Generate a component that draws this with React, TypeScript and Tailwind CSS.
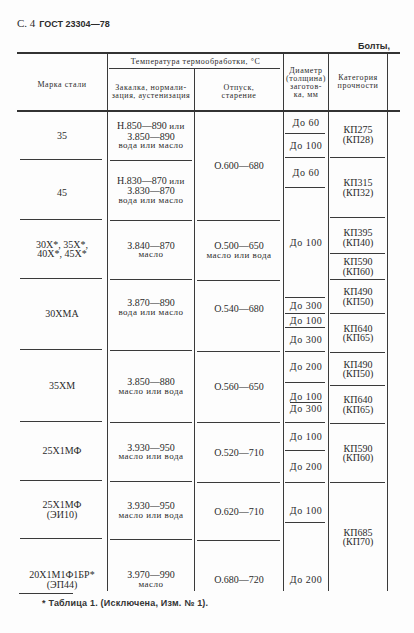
import React from 'react';

// ГОСТ 23304-78, с. 4 — таблица болтов (скан)

function H({ children }: { children: React.ReactNode }) {
  return (
    <div className="text-[8px] leading-[8px] tracking-[0.55px] text-center whitespace-nowrap">
      {children}
    </div>
  );
}

function N({ children, className = '' }: { children: React.ReactNode; className?: string }) {
  return <div className={`text-[10px] leading-[9.5px] whitespace-nowrap ${className}`}>{children}</div>;
}

function L({ children }: { children: React.ReactNode }) {
  return <div className="text-[9px] leading-[9.5px] tracking-[0.5px] whitespace-nowrap">{children}</div>;
}

function Cell({ className, children }: { className: string; children?: React.ReactNode }) {
  return <div className={`flex flex-col items-center text-center shrink-0 ${className}`}>{children}</div>;
}

function Sep({ className = 'mx-[2px]' }: { className?: string }) {
  return <div className={`h-px shrink-0 bg-[#3a3a3a] ${className}`} />;
}

export default function App() {
  return (
    <div className="w-[414px] h-[633px] bg-[#fdfdfd] text-[#2b2b2b] font-['Liberation_Serif',serif] overflow-hidden flex flex-col">
      {/* Заголовок страницы */}
      <div className="h-[40px] pt-[17px] pl-[17px] leading-[12px] flex items-baseline gap-[4px]">
        <span className="text-[11px]">С. 4</span>
        <span className="text-[9px] font-bold font-['Liberation_Sans',sans-serif]">ГОСТ 23304—78</span>
      </div>
      <div className="h-[12px] leading-[12px] text-right pr-[24px] text-[9px] font-bold font-['Liberation_Sans',sans-serif]">
        Болты,
      </div>

      {/* Таблица */}
      <div className="ml-[17px] w-[383px] flex flex-col">
        <div className="h-[2px] bg-[#333]" />

        {/* Шапка */}
        <div className="flex h-[56px]">
          <div className="w-[91px] border-r border-[#3a3a3a] flex items-center justify-center pt-[6px]">
            <H>Марка стали</H>
          </div>
          <div className="w-[176px] border-r border-[#3a3a3a] flex flex-col">
            <div className="h-[14px] flex items-center justify-center pt-[1px]">
              <H>Температура термообработки, °С</H>
            </div>
            <Sep className="ml-[1px] mr-[3px]" />
            <div className="flex flex-1">
              <div className="w-[87px] border-r border-[#3a3a3a] flex items-center justify-center pt-[4px]">
                <H>
                  Закалка, нормали-
                  <br />
                  зация, аустенизация
                </H>
              </div>
              <div className="flex-1 flex items-center justify-center pt-[4px]">
                <H>
                  Отпуск,
                  <br />
                  старение
                </H>
              </div>
            </div>
          </div>
          <div className="w-[45px] border-r border-[#3a3a3a] flex items-center justify-center pt-[2px]">
            <H>
              Диаметр
              <br />
              (толщина)
              <br />
              заготов-
              <br />
              ка, мм
            </H>
          </div>
          <div className="w-[59px] border-r border-[#3a3a3a] flex items-center justify-center">
            <H>
              Категория
              <br />
              прочности
            </H>
          </div>
        </div>

        <div className="h-[2px] bg-[#333]" />

        {/* Тело таблицы */}
        <div className="flex h-[479px]">
          {/* Марка стали */}
          <div className="w-[91px] border-r border-[#3a3a3a] flex flex-col">
            <Cell className="h-[47px] justify-center"><N>35</N></Cell>
            <Sep className="ml-[3px] mr-[5px]" />
            <Cell className="h-[59px] justify-center pt-[6px]"><N>45</N></Cell>
            <Sep className="ml-[3px] mr-[5px]" />
            <Cell className="h-[58px] justify-center">
              <N className="leading-[8.5px]">30Х*, 35Х*,</N>
              <N className="leading-[8.5px]">40Х*, 45Х*</N>
            </Cell>
            <Sep className="ml-[3px] mr-[5px]" />
            <Cell className="h-[70px] justify-center"><N>30ХМА</N></Cell>
            <Sep className="ml-[3px] mr-[5px]" />
            <Cell className="h-[71px] justify-center"><N>35ХМ</N></Cell>
            <Sep className="ml-[3px] mr-[5px]" />
            <Cell className="h-[58px] justify-center"><N>25Х1МФ</N></Cell>
            <Sep className="ml-[3px] mr-[5px]" />
            <Cell className="h-[57px] justify-center">
              <N>25Х1МФ</N>
              <N>(ЭИ10)</N>
            </Cell>
            <Sep className="ml-[3px] mr-[5px]" />
            <Cell className="flex-1 pt-[31px]">
              <N>20Х1М1Ф1БР*</N>
              <N>(ЭП44)</N>
            </Cell>
          </div>

          {/* Закалка */}
          <div className="w-[87px] border-r border-[#3a3a3a] flex flex-col">
            <Cell className="h-[48px] justify-center">
              <N>Н.850—890 <span className="text-[9px] tracking-[0.5px]">или</span></N>
              <N>З.850—890</N>
              <L>вода или масло</L>
            </Cell>
            <Sep />
            <Cell className="h-[59px] justify-center">
              <N>Н.830—870 <span className="text-[9px] tracking-[0.5px]">или</span></N>
              <N>З.830—870</N>
              <L>вода или масло</L>
            </Cell>
            <Sep />
            <Cell className="h-[58px] justify-center">
              <N>З.840—870</N>
              <L>масло</L>
            </Cell>
            <Sep />
            <Cell className="h-[70px] pt-[18px]">
              <N>З.870—890</N>
              <L>вода или масло</L>
            </Cell>
            <Sep />
            <Cell className="h-[71px] justify-center">
              <N>З.850—880</N>
              <L>масло или вода</L>
            </Cell>
            <Sep />
            <Cell className="h-[58px] justify-center">
              <N>З.930—950</N>
              <L>масло или вода</L>
            </Cell>
            <Sep />
            <Cell className="h-[57px] justify-center">
              <N>З.930—950</N>
              <L>масло или вода</L>
            </Cell>
            <Sep />
            <Cell className="flex-1 pt-[30px]">
              <N>З.970—990</N>
              <L>масло</L>
            </Cell>
          </div>

          {/* Отпуск */}
          <div className="w-[89px] border-r border-[#3a3a3a] flex flex-col">
            <Cell className="h-[108px] justify-center"><N>О.600—680</N></Cell>
            <Sep className="ml-[2px] mr-[3px]" />
            <Cell className="h-[59px] justify-center">
              <N>О.500—650</N>
              <L>масло или вода</L>
            </Cell>
            <Sep className="ml-[2px] mr-[3px]" />
            <Cell className="h-[70px] pt-[23px]"><N>О.540—680</N></Cell>
            <Sep className="ml-[2px] mr-[3px]" />
            <Cell className="h-[70px] justify-center"><N>О.560—650</N></Cell>
            <Sep className="ml-[2px] mr-[3px]" />
            <Cell className="h-[59px] justify-center"><N>О.520—710</N></Cell>
            <Sep className="ml-[2px] mr-[3px]" />
            <Cell className="h-[57px] justify-center"><N>О.620—710</N></Cell>
            <Sep className="ml-[2px] mr-[3px]" />
            <Cell className="flex-1 pt-[34px]"><N>О.680—720</N></Cell>
          </div>

          {/* Диаметр */}
          <div className="w-[45px] border-r border-[#3a3a3a] flex flex-col">
            <Cell className="h-[21px] justify-center"><N className="tracking-[0.5px]">До 60</N></Cell>
            <Sep className="ml-[1px] mr-[3px]" />
            <Cell className="h-[23px] justify-center"><N className="tracking-[0.5px]">До 100</N></Cell>
            <Sep className="ml-[1px] mr-[3px]" />
            <Cell className="h-[29px] justify-center"><N className="tracking-[0.5px]">До 60</N></Cell>
            <Sep className="ml-[1px] mr-[3px]" />
            <Cell className="h-[109px] justify-center"><N className="tracking-[0.5px]">До 100</N></Cell>
            <Sep className="ml-[1px] mr-[3px]" />
            <Cell className="h-[15px] justify-center"><N className="tracking-[0.5px]">До 300</N></Cell>
            <Sep className="ml-[1px] mr-[3px]" />
            <Cell className="h-[13px] justify-center"><N className="tracking-[0.5px]">До 100</N></Cell>
            <Sep className="ml-[1px] mr-[3px]" />
            <Cell className="h-[23px] justify-center"><N className="tracking-[0.5px]">До 300</N></Cell>
            <Sep className="ml-[1px] mr-[3px]" />
            <Cell className="h-[30px] justify-center"><N className="tracking-[0.5px]">До 200</N></Cell>
            <Sep className="ml-[1px] mr-[3px]" />
            <Cell className="h-[39px] justify-center">
              <N className="tracking-[0.5px] border-b border-[#3a3a3a]">До 100</N>
              <N className="tracking-[0.5px] pt-[1px]">До 300</N>
            </Cell>
            <Sep className="ml-[1px] mr-[3px]" />
            <Cell className="h-[27px] justify-center"><N className="tracking-[0.5px]">До 100</N></Cell>
            <Sep className="ml-[1px] mr-[3px]" />
            <Cell className="h-[31px] justify-center"><N className="tracking-[0.5px]">До 200</N></Cell>
            <Sep className="ml-[1px] mr-[3px]" />
            <Cell className="h-[39px] pt-[23px]"><N className="tracking-[0.5px]">До 100</N></Cell>
            <Sep className="ml-[1px] mr-[3px]" />
            <Cell className="flex-1 pt-[52px]"><N className="tracking-[0.5px]">До 200</N></Cell>
          </div>

          {/* Категория прочности */}
          <div className="w-[59px] border-r border-[#3a3a3a] flex flex-col">
            <Cell className="h-[45px] justify-center"><N>КП275</N><N>(КП28)</N></Cell>
            <Sep className="ml-[1px] mr-[2px]" />
            <Cell className="h-[59px] justify-center"><N>КП315</N><N>(КП32)</N></Cell>
            <Sep className="ml-[1px] mr-[2px]" />
            <Cell className="h-[35px] justify-center pt-[4px]"><N>КП395</N><N>(КП40)</N></Cell>
            <Sep className="ml-[1px] mr-[2px]" />
            <Cell className="h-[25px] justify-center"><N>КП590</N><N>(КП60)</N></Cell>
            <Sep className="ml-[1px] mr-[2px]" />
            <Cell className="h-[33px] justify-center"><N>КП490</N><N>(КП50)</N></Cell>
            <Sep className="ml-[1px] mr-[2px]" />
            <Cell className="h-[38px] justify-center"><N>КП640</N><N>(КП65)</N></Cell>
            <Sep className="ml-[1px] mr-[2px]" />
            <Cell className="h-[32px] justify-center"><N>КП490</N><N>(КП50)</N></Cell>
            <Sep className="ml-[1px] mr-[2px]" />
            <Cell className="h-[37px] justify-center"><N>КП640</N><N>(КП65)</N></Cell>
            <Sep className="ml-[1px] mr-[2px]" />
            <Cell className="h-[58px] justify-center"><N>КП590</N><N>(КП60)</N></Cell>
            <Sep className="ml-[1px] mr-[2px]" />
            <Cell className="flex-1 justify-center"><N>КП685</N><N>(КП70)</N></Cell>
          </div>
        </div>
      </div>

      {/* Сноска */}
      <div className="mt-[2px] ml-[19px] w-[54px] h-px bg-[#3a3a3a]" />
      <div className="mt-[3px] pl-[42px] text-[9px] leading-[12px] font-bold font-['Liberation_Sans',sans-serif] text-[#333] tracking-[0.2px]">
        * Таблица 1. (Исключена, Изм. № 1).
      </div>
    </div>
  );
}
